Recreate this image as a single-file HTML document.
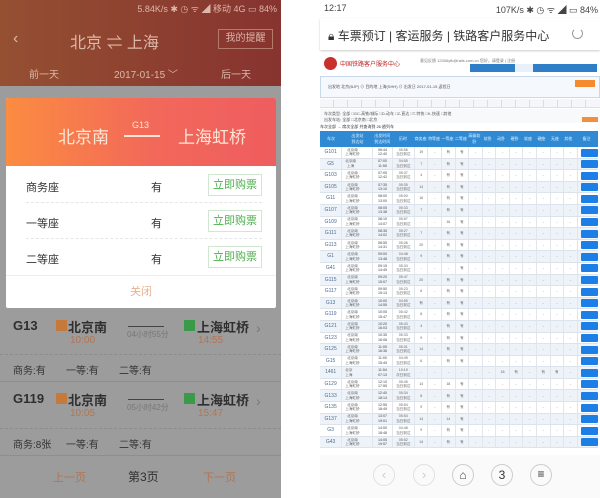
<!DOCTYPE html>
<html><head><meta charset="utf-8"><style>
*{margin:0;padding:0;box-sizing:border-box}
body{width:600px;height:498px;overflow:hidden;background:#fff;font-family:"Liberation Sans","Noto Sans CJK SC",sans-serif;position:relative}
.a{position:absolute}
#L{left:0;top:0;width:281px;height:498px;background:#9c9c9c;overflow:hidden}
#hdr{left:0;top:0;width:281px;height:86px;background:linear-gradient(90deg,#955032,#8c3e30 60%,#87332f)}
.w{color:#dcb8aa}
#card{left:6px;top:98px;width:270px;height:210px;background:#fff;border-radius:2px;overflow:hidden}
#ch{left:0;top:0;width:270px;height:68px;background:linear-gradient(90deg,#fb8c41,#f2685a 55%,#ef5d5f)}
.row{left:20px;width:236px;height:36px;border-bottom:1px dashed #e6e6e6;font-size:11px;color:#333}
.btn{position:absolute;right:0;top:7px;width:54px;height:22px;border:1px solid #cfe8cf;color:#4cae4c;font-size:11px;text-align:center;line-height:20px}
.lt{font-size:11px;color:#333}
.dk{color:#2f2f2f}
.or{color:#b07552}
#R{left:320px;top:0;width:280px;height:498px}
.r{display:flex;height:11.6px;border-bottom:1px solid #dde3ea;font-size:3.6px;color:#666;line-height:4.5px}
.r:nth-child(even){background:#eef3f9}
.r i{font-style:normal;border-right:1px solid #e1e6ec;display:flex;align-items:center;justify-content:center;text-align:center}
.r i:nth-child(1){width:23px;font-size:5px;color:#4a6c92}
.r i:nth-child(2){width:32px;justify-content:flex-start;padding-left:3px}
.r i:nth-child(3){width:20px;color:#444}
.r i:nth-child(4){width:23px}
.r i:nth-child(n+5){width:14px}
.r b{display:block;width:18px;height:8px;margin:1.5px 0 0 3px;background:#1d7fe6;border-radius:1px}
.h{display:flex;height:16px;font-size:4px;color:#e6f2fc;align-items:center}
.h span{text-align:center}
.tabs{display:flex}
.tabs span{width:14px;height:7px;border-right:1px solid #d8dde5;margin-top:1px}
</style></head><body>
<div id="L" class="a">
 <div id="hdr" class="a">
  <div class="a w" style="right:4px;top:2px;font-size:9px">5.84K/s ✱ ◷ ᯤ ◢ 移动 4G ▭ 84%</div>
  <div class="a w" style="left:13px;top:30px;font-size:16px">‹</div>
  <div class="a w" style="left:70px;top:29px;font-size:16px">北京 ⇌ 上海</div>
  <div class="a" style="left:218px;top:29px;width:55px;height:20px;border:1px solid #b57a6a;color:#d9b3a6;font-size:10px;text-align:center;line-height:18px">我的提醒</div>
  <div class="a w" style="left:29px;top:66px;font-size:10px">前一天</div>
  <div class="a w" style="left:114px;top:66px;font-size:10px">2017-01-15 ﹀</div>
  <div class="a w" style="left:221px;top:66px;font-size:10px">后一天</div>
 </div>
 <div id="card" class="a">
  <div id="ch" class="a">
   <div class="a" style="left:52px;top:25px;color:#fde6d6;font-size:17px">北京南</div>
   <div class="a" style="left:126px;top:22px;color:#fde6d6;font-size:9px">G13</div>
   <div class="a" style="left:118px;top:37px;width:36px;height:1.5px;background:#fde6d6"></div>
   <div class="a" style="left:172px;top:25px;color:#fde6d6;font-size:17px">上海虹桥</div>
  </div>
  <div class="a row" style="top:69px"><span class="a" style="top:12px">商务座</span><span class="a" style="left:125px;top:12px">有</span><div class="btn">立即购票</div></div>
  <div class="a row" style="top:105px"><span class="a" style="top:12px">一等座</span><span class="a" style="left:125px;top:12px">有</span><div class="btn">立即购票</div></div>
  <div class="a row" style="top:141px;border:none"><span class="a" style="top:12px">二等座</span><span class="a" style="left:125px;top:12px">有</span><div class="btn">立即购票</div></div>
  <div class="a" style="left:0;top:177px;width:270px;border-top:1px solid #eee;text-align:center;color:#e9b28e;font-size:11px;line-height:33px">关闭</div>
 </div>
 <div class="a dk" style="left:13px;top:318px;font-size:13px;font-weight:bold">G13</div>
 <div class="a" style="left:56px;top:320px;width:11px;height:11px;background:#c57a3c"></div>
 <div class="a dk" style="left:68px;top:317px;font-size:13px;font-weight:bold">北京南</div>
 <div class="a or" style="left:70px;top:335px;font-size:10px">10:00</div>
 <div class="a" style="left:128px;top:326px;width:36px;height:1px;background:#444"></div>
 <div class="a" style="left:127px;top:329px;font-size:8px;color:#777">04小时55分</div>
 <div class="a" style="left:184px;top:320px;width:11px;height:11px;background:#3b9a4a"></div>
 <div class="a dk" style="left:197px;top:317px;font-size:13px;font-weight:bold">上海虹桥</div>
 <div class="a or" style="left:198px;top:335px;font-size:10px">14:55</div>
 <div class="a" style="left:256px;top:320px;color:#777;font-size:14px">›</div>
 <div class="a" style="left:0;top:354px;width:281px;border-top:1px dashed #8c8c8c"></div>
 <div class="a lt" style="left:13px;top:362px;font-size:10px">商务:有</div>
 <div class="a lt" style="left:66px;top:362px;font-size:10px">一等:有</div>
 <div class="a lt" style="left:119px;top:362px;font-size:10px">二等:有</div>
 <div class="a" style="left:0;top:381px;width:281px;border-top:1px solid #8e8e8e"></div>
 <div class="a dk" style="left:13px;top:391px;font-size:13px;font-weight:bold">G119</div>
 <div class="a" style="left:56px;top:393px;width:11px;height:11px;background:#c57a3c"></div>
 <div class="a dk" style="left:68px;top:390px;font-size:13px;font-weight:bold">北京南</div>
 <div class="a or" style="left:70px;top:408px;font-size:10px">10:05</div>
 <div class="a" style="left:128px;top:399px;width:36px;height:1px;background:#444"></div>
 <div class="a" style="left:127px;top:402px;font-size:8px;color:#777">05小时42分</div>
 <div class="a" style="left:184px;top:393px;width:11px;height:11px;background:#3b9a4a"></div>
 <div class="a dk" style="left:197px;top:390px;font-size:13px;font-weight:bold">上海虹桥</div>
 <div class="a or" style="left:198px;top:408px;font-size:10px">15:47</div>
 <div class="a" style="left:256px;top:393px;color:#777;font-size:14px">›</div>
 <div class="a" style="left:0;top:428px;width:281px;border-top:1px dashed #8c8c8c"></div>
 <div class="a lt" style="left:13px;top:436px;font-size:10px">商务:8张</div>
 <div class="a lt" style="left:66px;top:436px;font-size:10px">一等:有</div>
 <div class="a lt" style="left:119px;top:436px;font-size:10px">二等:有</div>
 <div class="a" style="left:0;top:455px;width:281px;border-top:1px solid #8e8e8e"></div>
 <div class="a or" style="left:53px;top:469px;font-size:11px">上一页</div>
 <div class="a dk" style="left:128px;top:468px;font-size:12px">第3页</div>
 <div class="a or" style="left:203px;top:469px;font-size:11px">下一页</div>
</div>

<div id="R" class="a">
 <div class="a" style="left:4px;top:3px;font-size:9px;color:#444">12:17</div>
 <div class="a" style="right:2px;top:3px;font-size:9px;color:#444">107K/s ✱ ◷ ᯤ ◢ ▭ 84%</div>
 <div class="a" style="left:0;top:18px;width:280px;height:32px;background:#fff;box-shadow:0 1px 2px #ccc"></div>
 <div class="a" style="left:8px;top:27px;font-size:12px;color:#333">🔒︎ 车票预订 | 客运服务 | 铁路客户服务中心</div>
 <div class="a" style="left:252px;top:28px;width:11px;height:11px;border:1.2px solid #999;border-radius:50%;border-top-color:transparent"></div>
 <div class="a" style="left:4px;top:57px;width:13px;height:13px;border-radius:50%;background:#c9302c"></div>
 <div class="a" style="left:20px;top:59px;font-size:6px;color:#b22">中国铁路客户服务中心</div>
 <div class="a" style="left:100px;top:58px;font-size:4px;color:#777">意见反馈 12306yfk@rails.com.cn 您好，请登录 | 注册</div>
 <div class="a" style="left:150px;top:64px;width:127px;height:8px;background:#2f7fc8"></div>
 <div class="a" style="left:195px;top:64px;width:18px;height:8px;background:#e8f1fa"></div>
 <div class="a" style="left:0;top:76px;width:280px;height:22px;border:1px solid #c8d8ea;background:#f5f8fc"></div>
 <div class="a" style="left:8px;top:84px;font-size:4px;color:#555">出发地 北京(BJP) ⊙ 目的地 上海(SHH) ⊙ 出发日 2017-01-15 返程日</div>
 <div class="a" style="left:255px;top:80px;width:20px;height:7px;background:#f68b2d"></div>
 <div class="a tabs" style="left:0;top:99px;width:280px;height:9px;background:#f4f6f9;border-bottom:1px solid #dde"><span></span><span></span><span></span><span></span><span></span><span></span><span></span><span></span><span></span><span></span><span></span><span></span><span></span><span></span><span></span><span></span><span></span><span></span><span></span></div>
 <div class="a" style="left:0;top:109px;width:280px;height:14px;background:#f7f9fb"></div>
 <div class="a" style="left:4px;top:111px;font-size:4px;color:#555">车次类型: 全部 □GC-高铁/城际 □D-动车 □Z-直达 □T-特快 □K-快速 □其他</div>
 <div class="a" style="left:4px;top:117px;font-size:4px;color:#555">出发车站: 全部 □北京南 □北京</div>
 <div class="a" style="left:262px;top:117px;width:16px;height:5px;background:#f0903a"></div>
 <div class="a" style="left:0;top:124px;font-size:4px;color:#333">车次全部 → 席次全部 共查询到 26 趟列车</div>
 <div class="a h" style="left:0;top:131px;width:278px;background:#2f8ad3">
  <span style="width:23px">车次</span><span style="width:32px">出发站<br>到达站</span><span style="width:20px">出发时间<br>到达时间</span><span style="width:23px">历时</span><span style="width:14px">商务座</span><span style="width:14px">特等座</span><span style="width:14px">一等座</span><span style="width:14px">二等座</span><span style="width:14px">高级软卧</span><span style="width:14px">软卧</span><span style="width:14px">动卧</span><span style="width:14px">硬卧</span><span style="width:14px">软座</span><span style="width:14px">硬座</span><span style="width:14px">无座</span><span style="width:14px">其他</span><span style="width:24px">备注</span>
 </div>
 <div class="a" style="left:0;top:147px;width:278px;height:308px;overflow:hidden">
  <div class="r"><i>G101</i><i>北京南<br>上海虹桥</i><i>06:44<br>12:40</i><i>05:56<br>当日到达</i><i>19</i><i>-</i><i>有</i><i>有</i><i>-</i><i>-</i><i>-</i><i>-</i><i>-</i><i>-</i><i>-</i><i>-</i><b></b></div>
  <div class="r"><i>G5</i><i>北京南<br>上海</i><i>07:00<br>11:55</i><i>04:55<br>当日到达</i><i>7</i><i>-</i><i>有</i><i>有</i><i>-</i><i>-</i><i>-</i><i>-</i><i>-</i><i>-</i><i>-</i><i>-</i><b></b></div>
  <div class="r"><i>G103</i><i>北京南<br>上海虹桥</i><i>07:05<br>12:42</i><i>05:37<br>当日到达</i><i>4</i><i>-</i><i>有</i><i>有</i><i>-</i><i>-</i><i>-</i><i>-</i><i>-</i><i>-</i><i>-</i><i>-</i><b></b></div>
  <div class="r"><i>G105</i><i>北京南<br>上海虹桥</i><i>07:35<br>13:10</i><i>05:35<br>当日到达</i><i>14</i><i>-</i><i>有</i><i>有</i><i>-</i><i>-</i><i>-</i><i>-</i><i>-</i><i>-</i><i>-</i><i>-</i><b></b></div>
  <div class="r"><i>G11</i><i>北京南<br>上海虹桥</i><i>08:00<br>13:00</i><i>05:00<br>当日到达</i><i>16</i><i>-</i><i>有</i><i>有</i><i>-</i><i>-</i><i>-</i><i>-</i><i>-</i><i>-</i><i>-</i><i>-</i><b></b></div>
  <div class="r"><i>G107</i><i>北京南<br>上海虹桥</i><i>08:05<br>13:38</i><i>05:33<br>当日到达</i><i>7</i><i>-</i><i>有</i><i>有</i><i>-</i><i>-</i><i>-</i><i>-</i><i>-</i><i>-</i><i>-</i><i>-</i><b></b></div>
  <div class="r"><i>G109</i><i>北京南<br>上海虹桥</i><i>08:10<br>14:07</i><i>05:57<br>当日到达</i><i>-</i><i>-</i><i>16</i><i>有</i><i>-</i><i>-</i><i>-</i><i>-</i><i>-</i><i>-</i><i>-</i><i>-</i><b></b></div>
  <div class="r"><i>G111</i><i>北京南<br>上海虹桥</i><i>08:35<br>14:02</i><i>05:27<br>当日到达</i><i>7</i><i>-</i><i>有</i><i>有</i><i>-</i><i>-</i><i>-</i><i>-</i><i>-</i><i>-</i><i>-</i><i>-</i><b></b></div>
  <div class="r"><i>G113</i><i>北京南<br>上海虹桥</i><i>08:55<br>14:31</i><i>05:36<br>当日到达</i><i>20</i><i>-</i><i>有</i><i>有</i><i>-</i><i>-</i><i>-</i><i>-</i><i>-</i><i>-</i><i>-</i><i>-</i><b></b></div>
  <div class="r"><i>G1</i><i>北京南<br>上海虹桥</i><i>09:00<br>13:48</i><i>04:48<br>当日到达</i><i>9</i><i>-</i><i>有</i><i>有</i><i>-</i><i>-</i><i>-</i><i>-</i><i>-</i><i>-</i><i>-</i><i>-</i><b></b></div>
  <div class="r"><i>G41</i><i>北京南<br>上海虹桥</i><i>09:15<br>14:49</i><i>05:34<br>当日到达</i><i>-</i><i>-</i><i>-</i><i>有</i><i>-</i><i>-</i><i>-</i><i>-</i><i>-</i><i>-</i><i>-</i><i>-</i><b></b></div>
  <div class="r"><i>G115</i><i>北京南<br>上海虹桥</i><i>09:20<br>15:07</i><i>05:47<br>当日到达</i><i>20</i><i>-</i><i>有</i><i>有</i><i>-</i><i>-</i><i>-</i><i>-</i><i>-</i><i>-</i><i>-</i><i>-</i><b></b></div>
  <div class="r"><i>G117</i><i>北京南<br>上海虹桥</i><i>09:50<br>15:13</i><i>05:23<br>当日到达</i><i>6</i><i>-</i><i>有</i><i>有</i><i>-</i><i>-</i><i>-</i><i>-</i><i>-</i><i>-</i><i>-</i><i>-</i><b></b></div>
  <div class="r"><i>G13</i><i>北京南<br>上海虹桥</i><i>10:00<br>14:55</i><i>04:55<br>当日到达</i><i>有</i><i>-</i><i>有</i><i>有</i><i>-</i><i>-</i><i>-</i><i>-</i><i>-</i><i>-</i><i>-</i><i>-</i><b></b></div>
  <div class="r"><i>G119</i><i>北京南<br>上海虹桥</i><i>10:05<br>15:47</i><i>05:42<br>当日到达</i><i>8</i><i>-</i><i>有</i><i>有</i><i>-</i><i>-</i><i>-</i><i>-</i><i>-</i><i>-</i><i>-</i><i>-</i><b></b></div>
  <div class="r"><i>G121</i><i>北京南<br>上海虹桥</i><i>10:20<br>16:03</i><i>05:43<br>当日到达</i><i>4</i><i>-</i><i>有</i><i>有</i><i>-</i><i>-</i><i>-</i><i>-</i><i>-</i><i>-</i><i>-</i><i>-</i><b></b></div>
  <div class="r"><i>G123</i><i>北京南<br>上海虹桥</i><i>10:35<br>16:08</i><i>05:33<br>当日到达</i><i>9</i><i>-</i><i>有</i><i>有</i><i>-</i><i>-</i><i>-</i><i>-</i><i>-</i><i>-</i><i>-</i><i>-</i><b></b></div>
  <div class="r"><i>G125</i><i>北京南<br>上海虹桥</i><i>11:05<br>16:36</i><i>05:31<br>当日到达</i><i>14</i><i>-</i><i>有</i><i>有</i><i>-</i><i>-</i><i>-</i><i>-</i><i>-</i><i>-</i><i>-</i><i>-</i><b></b></div>
  <div class="r"><i>G15</i><i>北京南<br>上海虹桥</i><i>11:00<br>15:49</i><i>04:49<br>当日到达</i><i>6</i><i>-</i><i>有</i><i>有</i><i>-</i><i>-</i><i>-</i><i>-</i><i>-</i><i>-</i><i>-</i><i>-</i><b></b></div>
  <div class="r"><i>1461</i><i>北京<br>上海</i><i>11:54<br>07:13</i><i>19:19<br>次日到达</i><i>-</i><i>-</i><i>-</i><i>-</i><i>-</i><i>-</i><i>18</i><i>有</i><i>-</i><i>有</i><i>有</i><i>-</i><b></b></div>
  <div class="r"><i>G129</i><i>北京南<br>上海虹桥</i><i>12:10<br>17:55</i><i>05:45<br>当日到达</i><i>14</i><i>-</i><i>18</i><i>有</i><i>-</i><i>-</i><i>-</i><i>-</i><i>-</i><i>-</i><i>-</i><i>-</i><b></b></div>
  <div class="r"><i>G133</i><i>北京南<br>上海虹桥</i><i>12:40<br>18:14</i><i>05:34<br>当日到达</i><i>8</i><i>-</i><i>有</i><i>有</i><i>-</i><i>-</i><i>-</i><i>-</i><i>-</i><i>-</i><i>-</i><i>-</i><b></b></div>
  <div class="r"><i>G135</i><i>北京南<br>上海虹桥</i><i>12:55<br>18:49</i><i>05:54<br>当日到达</i><i>9</i><i>-</i><i>有</i><i>有</i><i>-</i><i>-</i><i>-</i><i>-</i><i>-</i><i>-</i><i>-</i><i>-</i><b></b></div>
  <div class="r"><i>G137</i><i>北京南<br>上海虹桥</i><i>13:07<br>19:01</i><i>05:54<br>当日到达</i><i>14</i><i>-</i><i>14</i><i>有</i><i>-</i><i>-</i><i>-</i><i>-</i><i>-</i><i>-</i><i>-</i><i>-</i><b></b></div>
  <div class="r"><i>G3</i><i>北京南<br>上海虹桥</i><i>14:00<br>18:48</i><i>04:48<br>当日到达</i><i>9</i><i>-</i><i>有</i><i>有</i><i>-</i><i>-</i><i>-</i><i>-</i><i>-</i><i>-</i><i>-</i><i>-</i><b></b></div>
  <div class="r"><i>G43</i><i>北京南<br>上海虹桥</i><i>14:05<br>19:57</i><i>05:52<br>当日到达</i><i>14</i><i>-</i><i>有</i><i>有</i><i>-</i><i>-</i><i>-</i><i>-</i><i>-</i><i>-</i><i>-</i><i>-</i><b></b></div>
 </div>
 <div class="a" style="left:0;top:455px;width:280px;height:43px;background:#fafafa"></div>
 <div class="a" style="left:53px;top:464px;width:22px;height:22px;border:1px solid #e0e0e0;border-radius:50%;text-align:center;line-height:20px;color:#ccc;font-size:13px">‹</div>
 <div class="a" style="left:93px;top:464px;width:22px;height:22px;border:1px solid #e0e0e0;border-radius:50%;text-align:center;line-height:20px;color:#ccc;font-size:13px">›</div>
 <div class="a" style="left:132px;top:464px;width:22px;height:22px;border:1px solid #ccc;border-radius:50%;text-align:center;line-height:20px;color:#444;font-size:12px">⌂</div>
 <div class="a" style="left:171px;top:464px;width:22px;height:22px;border:1px solid #ccc;border-radius:50%;text-align:center;line-height:20px;color:#333;font-size:12px">3</div>
 <div class="a" style="left:210px;top:464px;width:22px;height:22px;border:1px solid #ccc;border-radius:50%;text-align:center;line-height:19px;color:#333;font-size:12px">≡</div>
</div>
</body></html>
